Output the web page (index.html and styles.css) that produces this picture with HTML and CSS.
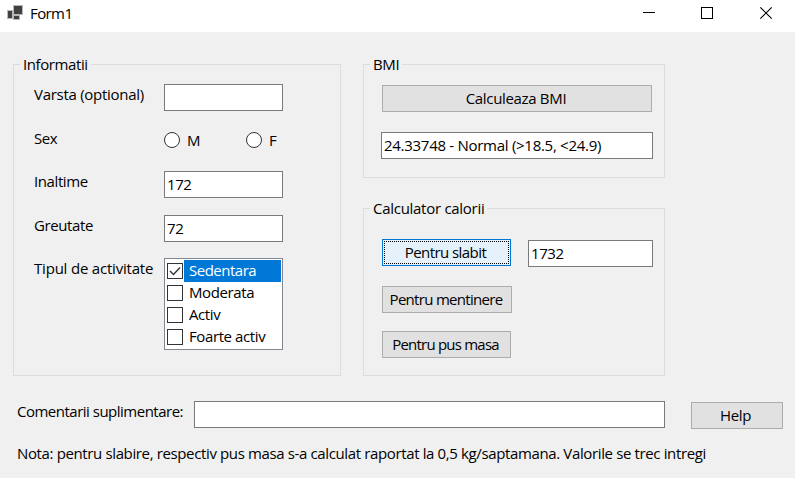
FILE: index.html
```
<!DOCTYPE html>
<html lang="ro">
<head>
<meta charset="utf-8">
<title>Form1</title>
<link rel="stylesheet" href="styles.css">
</head>
<body>
<header class="titlebar">
  <svg class="app-icon" width="16" height="16" viewBox="0 0 16 16" shape-rendering="crispEdges">
    <path fill="#b9b9b9" d="M6 0h10v10h-3v5H6v-1H0V5h6z"/>
    <path fill="#404040" d="M7 1h8v8H7zM1 6h4v7H1zM7 11h5v3H7z"/>
  </svg>
  <span class="title">Form1</span>
  <svg class="control" width="59" height="32" viewBox="0 0 59 32" shape-rendering="crispEdges"><path d="M25 12.500h12" stroke="#000" fill="none"/></svg>
  <svg class="control" width="59" height="32" viewBox="0 0 59 32" shape-rendering="crispEdges"><path d="M24.500 7.500h11v11h-11z" stroke="#000" fill="none"/></svg>
  <svg class="control" width="59" height="32" viewBox="0 0 59 32"><path d="M24.300 7.300l11.400 11.400M35.700 7.300L24.300 18.700" stroke="#000" stroke-width="1.100" fill="none"/></svg>
</header>
<main class="form">
  <div class="groups">
    <fieldset class="group info">
      <legend>Informatii</legend>
      <div class="row"><label class="wide" for="varsta">Varsta (optional)</label><input class="field" id="varsta"></div>
      <div class="row sex"><span>Sex</span>
        <div class="radios">
          <label class="radio"><i class="circle"></i>M</label>
          <label class="radio"><i class="circle"></i>F</label>
        </div>
      </div>
      <div class="row height"><label for="inaltime">Inaltime</label><input class="field" id="inaltime" value="172"></div>
      <div class="row weight"><label for="greutate">Greutate</label><input class="field" id="greutate" value="72"></div>
      <div class="row activity"><span class="wider">Tipul de activitate</span>
        <ul class="list">
          <li class="item selected"><i class="check"><svg width="14" height="14" viewBox="0 0 14 14"><path d="M2 7l3.500 3.500L12 3.500" fill="none" stroke="#333" stroke-width="1.400"/></svg></i><span class="caption tight">Sedentara</span></li>
          <li class="item"><i class="check"></i><span class="caption">Moderata</span></li>
          <li class="item"><i class="check"></i><span class="caption">Activ</span></li>
          <li class="item"><i class="check"></i><span class="caption">Foarte activ</span></li>
        </ul>
      </div>
    </fieldset>
    <div class="side">
      <fieldset class="group bmi">
        <legend>BMI</legend>
        <button class="button">Calculeaza BMI</button>
        <input class="field wide" value="24.33748 - Normal (&gt;18.5, &lt;24.9)">
      </fieldset>
      <fieldset class="group calories">
        <legend class="wide">Calculator calorii</legend>
        <div class="actions">
          <button class="button focused">Pentru slabit</button>
          <button class="button maintain">Pentru mentinere</button>
          <button class="button gain">Pentru pus masa</button>
        </div>
        <input class="field" value="1732">
      </fieldset>
    </div>
  </div>
  <div class="comments">
    <label class="tight" for="comentarii">Comentarii suplimentare:</label>
    <input class="field" id="comentarii">
    <button class="button help">Help</button>
  </div>
  <p class="note">Nota: pentru slabire, respectiv pus masa s-a calculat raportat la 0,5 kg/saptamana. Valorile se trec intregi</p>
</main>
</body>
</html>
```
FILE: styles.css
```
* { box-sizing: border-box; }

html, body { margin: 0; height: 100%; overflow: hidden; }

body, input, button {
  font: 15px/20px "Open Sans", "Noto Sans", sans-serif;
  letter-spacing: -0.4px;
  color: #000;
}

body { background: #f0f0f0; white-space: nowrap; }

/* Tracking adjustments */
.wide { letter-spacing: -0.28px; }
.wider { letter-spacing: -0.2px; }
.tight { letter-spacing: -0.5px; }

/* Window chrome */
.titlebar {
  display: flex;
  height: 32px;
  padding-left: 7px;
  background: #fff;
}
.app-icon { margin-top: 5px; }
.title { flex: 1; padding: 3px 0 0 7px; letter-spacing: -0.6px; }
.control { flex: none; }

.form { padding: 22px 12px 0 13px; }

.groups {
  display: grid;
  grid-template-columns: 328px 302px;
  gap: 22px;
}

.group {
  min-width: 0;
  margin: 0;
  padding: 0;
  border: 1px solid #dcdcdc;
}
.group legend { margin-left: 6px; padding: 0 3px; height: 20px; }

.field {
  display: block;
  width: 119px;
  height: 27px;
  padding: 2px 2px 3px;
  border: 1px solid #7a7a7a;
  border-radius: 0;
  background: #fff;
  outline: none;
}

.button {
  display: block;
  height: 27px;
  padding: 0 2px 1px 0;
  border: 1px solid #adadad;
  border-radius: 0;
  background: #e1e1e1;
  text-align: center;
}

/* Personal data */
.info { height: 322px; }
.row {
  display: grid;
  grid-template-columns: 130px 119px;
  align-items: start;
  padding-left: 20px;
  margin-top: 10px;
}
.row.sex { height: 22px; margin-top: 17px; }
.row.height { margin-top: 21px; }
.row.weight { margin-top: 17px; }
.row.activity { margin-top: 16px; }

.radios { display: flex; padding-top: 2px; }
.radio { display: flex; width: 82px; flex: none; gap: 7px; }
.circle {
  width: 16px;
  height: 16px;
  margin-top: 2px;
  border: 1px solid #333;
  border-radius: 50%;
  background: #fff;
}

.list {
  margin: 0;
  padding: 1px;
  height: 92px;
  border: 1px solid #828790;
  background: #fff;
  list-style: none;
}
.item { display: flex; height: 22px; padding-left: 1px; }
.check {
  display: block;
  width: 16px;
  height: 16px;
  margin: 3px 1px 0 0;
  border: 1px solid #333;
  background: #fff;
}
.check svg { display: block; }
.caption { flex: 1; padding-left: 5px; }
.selected .caption { background: #0078d7; color: #fff; }

/* Results */
.side { display: flex; flex-direction: column; gap: 20px; }
.bmi { height: 124px; }
.bmi .button { width: 270px; margin: 11px 0 0 18px; letter-spacing: -0.33px; }
.bmi .field { width: 272px; margin: 20px 0 0 17px; }

.calories { height: 178px; }
.calories .actions { float: left; width: 130px; margin: 21px 0 0 18px; }
.actions .button { width: 129px; }
.actions .maintain { width: 130px; margin: 20px 0 18px; letter-spacing: -0.7px; }
.actions .gain { letter-spacing: -0.78px; }
.calories > .field { float: left; width: 125px; margin: 22px 0 0 16px; }
.actions .focused {
  border-color: #0078d7;
  background: #e5f1fb;
  outline: 1px dotted #000;
  outline-offset: -3px;
  letter-spacing: -0.56px;
}

/* Footer */
.comments { display: flex; align-items: flex-start; padding: 25px 0 0 4px; }
.comments label { width: 177px; }
.comments .field { width: 471px; }
.comments .help { width: 92px; margin: 1px 0 0 26px; padding-right: 3px; }
.note { margin: 14px 0 0 4px; letter-spacing: -0.367px; }
```
